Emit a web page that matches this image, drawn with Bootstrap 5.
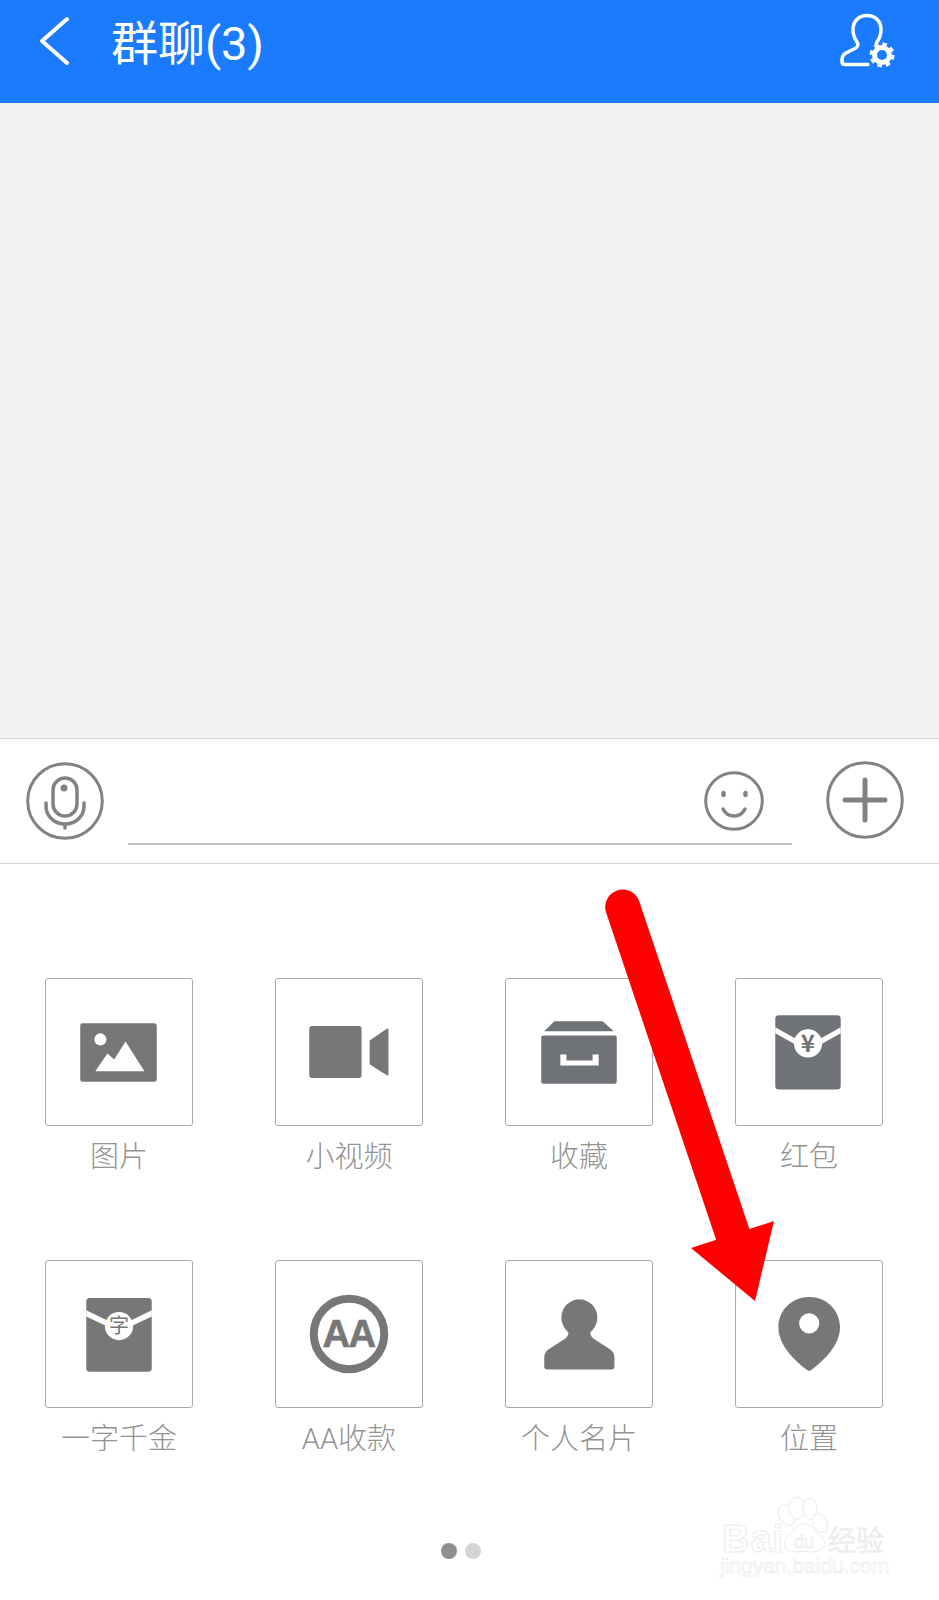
<!DOCTYPE html>
<html lang="zh-CN">
<head>
    <meta charset="UTF-8">
    <title>群聊(3)</title>
    <link href="https://cdn.jsdelivr.net/npm/bootstrap@5.3.0/dist/css/bootstrap.min.css" rel="stylesheet">
    <style>
        body { background: #fff; font-family: Roboto, "Noto Sans CJK SC", sans-serif; font-weight: 300; }
        .screen { width: 939px; height: 1600px; }
        .app-header { height: 103px; background: #1a7bff; color: #fff; padding: 5px 29px 0 39px; }
        .back-icon { margin-top: 11px; }
        .chat-title { margin: 13px 0 0 41px; font-size: 47px; line-height: 52px; font-weight: 400; white-space: nowrap; }
        .chat-area { height: 635px; background: #f2f2f2; }
        .input-bar { height: 126px; padding: 23px 35px 0 26px; gap: 24px; border-top: 1px solid #d6d6d6; border-bottom: 1px solid #d6d6d6; }
        .input-line { height: 83px; padding: 9px 28px 0 0; border-bottom: 2px solid #c2c2c2; }
        .plus-btn { margin-left: 10px; margin-top: -1px; }
        .panel { padding: 114px 0 0 45px; }
        .tool-grid { display: grid; grid-template-columns: repeat(4, 148px); column-gap: 82px; row-gap: 83px; }
        .tool-tile { width: 148px; height: 148px; border: 1px solid #a8a8a8; border-radius: 3px; background: #fff; }
        .tool-tile svg { display: block; margin: -1px; }
        .tool-label { margin-top: 11px; height: 40px; font-size: 29px; line-height: 40px; color: #939393; text-align: center; white-space: nowrap; }
        .pager { padding-right: 62px; margin-top: 84px; gap: 8px; }
        .pager-dot { width: 16px; height: 16px; border-radius: 50%; background: #d4d4d4; }
        .pager-dot.on { background: #8f8f8f; }
        .red-arrow { position: absolute; left: 600px; top: 885px; }
        .watermark { position: absolute; left: 710px; top: 1490px; }
        .mark-text { fill: #fff; stroke: #ebebeb; stroke-width: 1; font-family: "Liberation Sans", sans-serif; }
        .mark-cjk { font-family: "Noto Sans CJK SC", sans-serif; }
        .mark-small { stroke: #eeeeee; stroke-width: .8; }
        .g { fill: #777; }
        .g2 { fill: #6f7377; }
        .line-icon { fill: none; stroke: #808386; stroke-linecap: round; }
    </style>
</head>
<body class="m-0">
<div class="screen position-relative overflow-hidden">
    <div class="app-header d-flex align-items-start">
        <svg class="back-icon" width="31" height="50" viewBox="0 0 31 50">
            <polyline points="28,3 3,25 28,47" fill="none" stroke="#fff" stroke-width="4" stroke-linecap="round" stroke-linejoin="round"/>
        </svg>
        <div class="chat-title">群聊(3)</div>
        <svg class="ms-auto" width="85" height="75" viewBox="0 0 85 75">
            <path d="M43 59.5H20c-2 0-3-1-3-2.500v-2.500c0-3 1.500-5 4-6.500l9-4.500c3-1.500 3.500-4 2-6.500-2.500-3.500-4-7-4-12.500 0-9 6.500-14 14-14s14 5 14 14c0 5-1.500 9-4 12.500-1 1.500-1 3 0 4l3 2" fill="none" stroke="#fff" stroke-width="3.500" stroke-linecap="round"/>
            <circle cx="57" cy="50" r="7.500" fill="none" stroke="#fff" stroke-width="5"/>
            <circle cx="57" cy="50" r="11" fill="none" stroke="#fff" stroke-width="3" stroke-dasharray="4.600 4.040"/>
        </svg>
    </div>

    <div class="chat-area"></div>

    <div class="input-bar d-flex align-items-start">
        <svg class="flex-shrink-0" width="78" height="78" viewBox="0 0 78 78">
            <circle cx="39" cy="39" r="37.300" class="line-icon" stroke-width="3"/>
            <rect x="27" y="16" width="24" height="38" rx="12" class="line-icon" stroke-width="3.500"/>
            <circle cx="38" cy="26" r="3.500" fill="#808386"/>
            <path d="M20 41v3c0 11 9 18 19 18s19-7 19-18v-3M39 62v4" class="line-icon" stroke-width="3.500"/>
        </svg>
        <div class="input-line flex-grow-1 d-flex justify-content-end">
            <svg width="60" height="60" viewBox="0 0 60 60">
                <circle cx="30" cy="30" r="28.300" class="line-icon" stroke-width="3"/>
                <ellipse cx="19.500" cy="23" rx="2.300" ry="3.200" fill="#808386"/>
                <ellipse cx="41.500" cy="23" rx="2.300" ry="3.200" fill="#808386"/>
                <path d="M19 38c2 4 6 7 11 7s9-3 11-7" class="line-icon" stroke-width="3.500"/>
            </svg>
        </div>
        <svg class="plus-btn flex-shrink-0" width="78" height="78" viewBox="0 0 78 78">
            <circle cx="39" cy="39" r="37.300" class="line-icon" stroke-width="3"/>
            <path d="M19 39h40M39 19v40" class="line-icon" stroke-width="5"/>
        </svg>
    </div>

    <div class="panel">
        <div class="tool-grid">
            <div>
                <div class="tool-tile">
                    <svg width="148" height="148" viewBox="0 0 147 147">
                        <rect x="35" y="45" width="76" height="58" rx="2.500" class="g"/>
                        <circle cx="55" cy="61" r="6" fill="#fff"/>
                        <polygon points="50,92.700 62,75 68.700,81 80,63 98.700,92.700" fill="#fff"/>
                    </svg>
                </div>
                <div class="tool-label">图片</div>
            </div>
            <div>
                <div class="tool-tile">
                    <svg width="148" height="148" viewBox="0 0 147 147">
                        <rect x="34" y="47.700" width="52" height="51.600" rx="3" class="g"/>
                        <path d="M94 62l17-11.500c1-.6 1.700-.2 1.700 1V95.500c0 1.200-.7 1.600-1.700 1L94 85.700z" class="g"/>
                    </svg>
                </div>
                <div class="tool-label">小视频</div>
            </div>
            <div>
                <div class="tool-tile">
                    <svg width="148" height="148" viewBox="0 0 147 147">
                        <polygon points="49,43 97,43 108,53 39,53" class="g2"/>
                        <path d="M36 59a2 2 0 0 1 2-2H109a2 2 0 0 1 2 2V103a2 2 0 0 1-2 2H38a2 2 0 0 1-2-2z" class="g2"/>
                        <path d="M55 76h6v6h26v-6h6v11H55z" fill="#fff"/>
                    </svg>
                </div>
                <div class="tool-label">收藏</div>
            </div>
            <div>
                <div class="tool-tile">
                    <svg width="148" height="148" viewBox="0 0 147 147">
                        <rect x="40" y="37" width="65" height="73.700" rx="3.500" class="g2"/>
                        <polygon points="40,49 60,60 60,66 40,55" fill="#fff"/>
                        <polygon points="105,49 85,60 85,66 105,55" fill="#fff"/>
                        <circle cx="72.500" cy="65" r="14" fill="#fff"/>
                        <text x="72.500" y="73.500" text-anchor="middle" font-size="24" font-weight="700" font-family="'Noto Sans CJK SC', sans-serif" fill="#6f7377">¥</text>
                    </svg>
                </div>
                <div class="tool-label">红包</div>
            </div>
            <div>
                <div class="tool-tile">
                    <svg width="148" height="148" viewBox="0 0 147 147">
                        <rect x="41" y="37.700" width="65" height="73.300" rx="3.500" class="g"/>
                        <polygon points="41,50 62,60 62,66 41,56" fill="#fff"/>
                        <polygon points="106,50 85,60 85,66 106,56" fill="#fff"/>
                        <circle cx="73.500" cy="65.700" r="14" fill="#fff"/>
                        <text x="73.500" y="73" text-anchor="middle" font-size="20" font-weight="400" font-family="'Noto Sans CJK SC', sans-serif" fill="#777">字</text>
                    </svg>
                </div>
                <div class="tool-label">一字千金</div>
            </div>
            <div>
                <div class="tool-tile">
                    <svg width="148" height="148" viewBox="0 0 147 147">
                        <circle cx="73.500" cy="73.500" r="35" fill="none" stroke="#777" stroke-width="8"/>
                        <text x="73" y="86" text-anchor="middle" font-size="38" font-weight="700" letter-spacing="-1.500" stroke="#777" stroke-width=".6" font-family="'Liberation Sans', sans-serif" fill="#777">AA</text>
                    </svg>
                </div>
                <div class="tool-label">AA收款</div>
            </div>
            <div>
                <div class="tool-tile">
                    <svg width="148" height="148" viewBox="0 0 147 147">
                        <path d="M73.700 39a18 18 0 0 1 18 18c0 7-4 12-7 15 0 4 3 6 6 8l14 9c3 2 4 5 4 8v9c0 1.700-1 2.700-3 2.700H42c-2 0-3-1-3-2.700v-9c0-3 1-6 4-8l14-9c3-2 6-4 6-8-3-3-7-8-7-15a18 18 0 0 1 18-18z" class="g"/>
                    </svg>
                </div>
                <div class="tool-label">个人名片</div>
            </div>
            <div>
                <div class="tool-tile">
                    <svg width="148" height="148" viewBox="0 0 147 147">
                        <path fill-rule="evenodd" d="M73.700 36.700c17 0 30.600 13 30.600 30 0 18-16 33-29 42.800-1 .7-2.200.7-3.200 0-13-9.800-29-24.800-29-42.800 0-17 13.600-30 30.600-30zM73.700 53a10 10 0 1 0 0 20 10 10 0 0 0 0-20z" class="g"/>
                    </svg>
                </div>
                <div class="tool-label">位置</div>
            </div>
        </div>
        <div class="pager d-flex justify-content-center">
            <div class="pager-dot on"></div>
            <div class="pager-dot"></div>
        </div>
    </div>

    <!-- annotation drawn over the screenshot -->
    <svg class="red-arrow" width="180" height="420" viewBox="0 0 180 420">
        <line x1="22.700" y1="22" x2="135" y2="356" stroke="#f00" stroke-width="35" stroke-linecap="round"/>
        <polygon points="155,416 174,336 91,363" fill="#f00"/>
    </svg>

    <svg class="watermark" width="190" height="100" viewBox="0 0 190 100">
        <ellipse cx="77" cy="25" rx="8" ry="11" transform="rotate(-30 77 25)" class="mark-text"/>
        <ellipse cx="87" cy="18" rx="8" ry="11" class="mark-text"/>
        <ellipse cx="100" cy="19" rx="7" ry="11" class="mark-text"/>
        <ellipse cx="110" cy="33" rx="7" ry="10" transform="rotate(-25 110 33)" class="mark-text"/>
        <path d="M94 34c-8 0-11 7-14 10-4 3-7 6-5 12 2 6 9 7 19 5 9 2 17 1 20-5 2-6-2-9-6-12-3-3-6-10-14-10z" class="mark-text"/>
        <text x="12" y="62" font-size="38" font-weight="700" letter-spacing="1" class="mark-text">Bai</text>
        <text x="84" y="58" font-size="18" class="mark-text mark-small">du</text>
        <text x="118" y="61" font-size="28" class="mark-text mark-cjk">经验</text>
        <text x="10" y="83" font-size="21" class="mark-text mark-small">jingyan.baidu.com</text>
    </svg>
</div>
<script src="https://cdn.jsdelivr.net/npm/bootstrap@5.3.0/dist/js/bootstrap.bundle.min.js"></script>
</body>
</html>
